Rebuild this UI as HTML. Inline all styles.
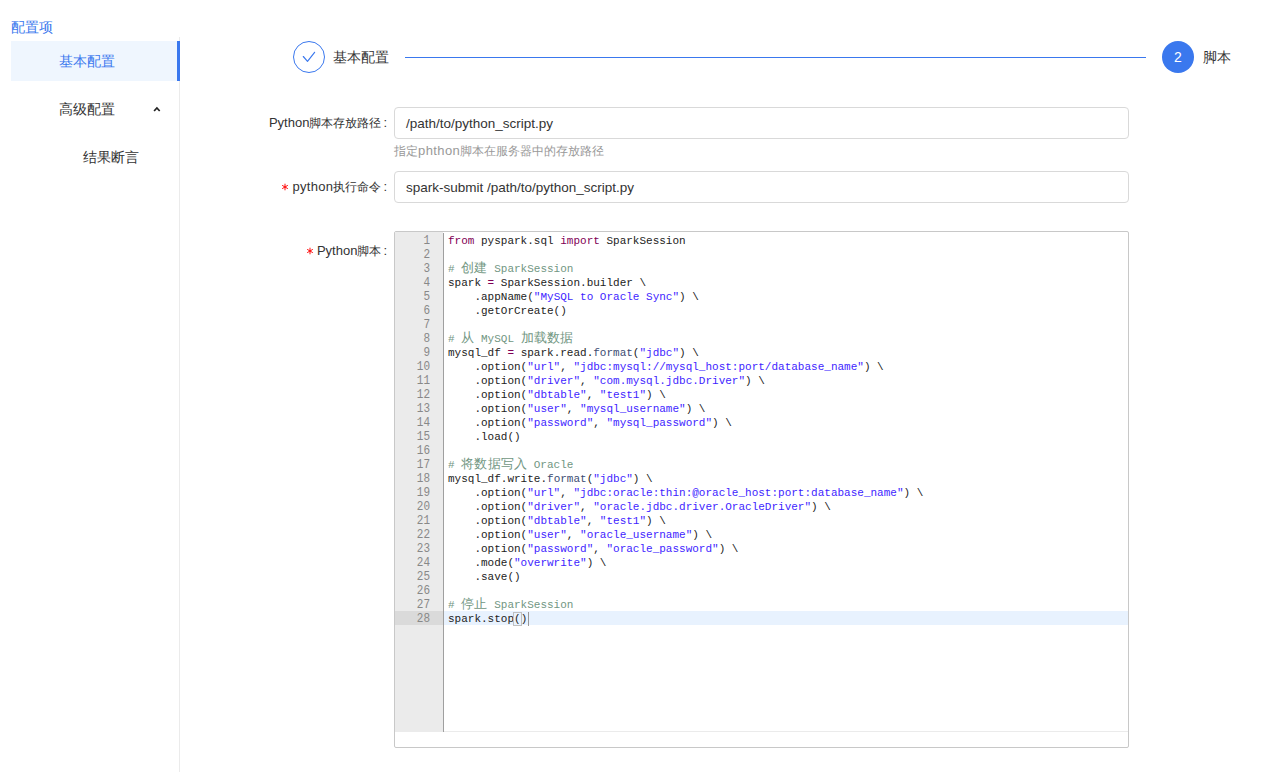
<!DOCTYPE html>
<html><head><meta charset="utf-8">
<style>
html,body{margin:0;padding:0;width:1282px;height:772px;overflow:hidden;background:#fff;}
body{font-family:"Liberation Sans",sans-serif;color:#333;position:relative;}
.abs{position:absolute;white-space:nowrap;}
.side-title{left:11px;top:17px;font-size:14px;line-height:20px;color:#3a78ee;}
.side-border{left:179px;top:37px;width:1px;height:735px;background:#ebebeb;}
.side-active{left:11px;top:41px;width:169px;height:40px;background:#eff6fe;}
.side-bar{left:177px;top:41px;width:3px;height:40px;background:#3a78ee;}
.menu{font-size:14px;line-height:20px;}
.step-circle{left:293px;top:41px;width:30px;height:30px;border:1px solid #3a78ee;border-radius:50%;}
.step-line{left:405px;top:57px;width:741px;height:1px;background:#3a78ee;}
.step-num{left:1162px;top:41px;width:32px;height:32px;border-radius:50%;background:#3a78ee;color:#fff;font-size:14px;line-height:32px;text-align:center;}
.label{font-size:13px;line-height:20px;color:#333;text-align:right;}
.req{color:#f5222d;display:inline-block;width:11px;position:relative;top:3px;}
.cj{font-size:12px;}
.col{display:inline-block;margin-left:2px;}
.input{left:394px;width:733px;height:30px;border:1px solid #d9d9d9;border-radius:4px;}
.input span{position:absolute;left:11px;top:7px;font-size:13.5px;line-height:18px;color:#333;}
.help{left:394px;top:141px;font-size:12px;line-height:20px;color:#999;}
.editor{left:394px;top:231px;width:733px;height:515px;border:1px solid #c8c8c8;border-radius:2px;overflow:hidden;}
.gutter{position:absolute;left:0;top:0;width:48px;height:500px;background:#ebebeb;}
.gborder{position:absolute;left:48px;top:1px;width:1px;height:499px;background:#9f9f9f;}
.hline{position:absolute;left:49px;top:499px;width:684px;height:1px;background:#ebebeb;}
.code{position:absolute;left:49px;top:0px;right:0;font-family:"Liberation Mono",monospace;font-size:11px;line-height:14px;}
.ln{position:absolute;left:0;width:35px;text-align:right;font-family:"Liberation Mono",monospace;font-size:11px;line-height:14px;color:#888;}
.row{position:absolute;left:0;right:0;height:14px;padding-left:4px;padding-top:1px;box-sizing:border-box;white-space:pre;color:#222;}
.row.act{background:rgb(232,242,254);}
.gl{position:absolute;left:0;width:35px;padding-right:13px;height:14px;text-align:right;font-family:"Liberation Mono",monospace;font-size:12px;line-height:14px;color:#888;transform:scaleX(0.9167);transform-origin:35px 50%;}
.gact{position:absolute;left:0;width:48px;height:14px;background:#dadada;}
i.w{font-style:normal;display:inline-block;width:13.2px;text-align:left;font-size:13px;line-height:14px;vertical-align:top;}
.b{outline:1px solid #c0c0c0;}
.cur{display:inline-block;width:1px;height:14px;background:#999;vertical-align:top;margin-left:1px;}
.k{color:rgb(127,0,85);}
.s{color:rgb(62,30,255);}
.c{color:rgb(113,150,130);}
.f{color:rgb(60,76,114);}
</style></head>
<body>
<div class="abs side-title">配置项</div>
<div class="abs side-border"></div>
<div class="abs side-active"></div>
<div class="abs side-bar"></div>
<div class="abs menu" style="left:59px;top:51px;color:#3a78ee;">基本配置</div>
<div class="abs menu" style="left:59px;top:99px;">高级配置</div>
<div class="abs menu" style="left:83px;top:147px;">结果断言</div>
<svg class="abs" style="left:150px;top:102px;" width="12" height="12" viewBox="0 0 12 12"><polyline points="4.1,9 6.9,5.9 9.7,9" fill="none" stroke="#222" stroke-width="1.7" stroke-linecap="butt" stroke-linejoin="miter"/></svg>

<svg class="abs" style="left:293px;top:41px;" width="32" height="32" viewBox="0 0 32 32"><circle cx="16" cy="16" r="15.5" fill="none" stroke="#3a78ee" stroke-width="1"/><polyline points="10.3,15.5 14.5,20.3 21.6,11.3" fill="none" stroke="#3a78ee" stroke-width="1.15" stroke-linecap="round" stroke-linejoin="round"/></svg>
<div class="abs" style="left:333px;top:47px;font-size:14px;line-height:20px;">基本配置</div>
<div class="abs step-line"></div>
<div class="abs step-num">2</div>
<div class="abs" style="left:1203px;top:47px;font-size:14px;line-height:20px;">脚本</div>

<div class="abs label" style="right:895px;top:113px;">Python<span class="cj">脚本存放路径</span><span class="col">:</span></div>
<div class="abs input" style="top:107px;"><span>/path/to/python_script.py</span></div>
<div class="abs help">指定<span style="font-size:13px;letter-spacing:0.4px;">phthon</span>脚本在服务器中的存放路径</div>
<svg class="abs" style="left:280.5px;top:183px;" width="8" height="8" viewBox="-4 -4 8 8"><g stroke="#f00" stroke-width="0.95" stroke-linecap="round"><line x1="0" y1="-2.9" x2="0" y2="2.9"/><line x1="-2.5" y1="-1.45" x2="2.5" y2="1.45"/><line x1="-2.5" y1="1.45" x2="2.5" y2="-1.45"/></g></svg>
<div class="abs label" style="right:895px;top:177px;"><span style="letter-spacing:0.3px">python</span><span class="cj">执行命令</span><span class="col">:</span></div>
<div class="abs input" style="top:171px;"><span>spark-submit /path/to/python_script.py</span></div>
<svg class="abs" style="left:306px;top:247px;" width="8" height="8" viewBox="-4 -4 8 8"><g stroke="#f00" stroke-width="0.95" stroke-linecap="round"><line x1="0" y1="-2.9" x2="0" y2="2.9"/><line x1="-2.5" y1="-1.45" x2="2.5" y2="1.45"/><line x1="-2.5" y1="1.45" x2="2.5" y2="-1.45"/></g></svg>
<div class="abs label" style="right:895px;top:241px;">Python<span class="cj">脚本</span><span class="col">:</span></div>

<div class="abs editor">
  <div class="gutter">
<div class="gl" style="top:2px">1</div>
<div class="gl" style="top:16px">2</div>
<div class="gl" style="top:30px">3</div>
<div class="gl" style="top:44px">4</div>
<div class="gl" style="top:58px">5</div>
<div class="gl" style="top:72px">6</div>
<div class="gl" style="top:86px">7</div>
<div class="gl" style="top:100px">8</div>
<div class="gl" style="top:114px">9</div>
<div class="gl" style="top:128px">10</div>
<div class="gl" style="top:142px">11</div>
<div class="gl" style="top:156px">12</div>
<div class="gl" style="top:170px">13</div>
<div class="gl" style="top:184px">14</div>
<div class="gl" style="top:198px">15</div>
<div class="gl" style="top:212px">16</div>
<div class="gl" style="top:226px">17</div>
<div class="gl" style="top:240px">18</div>
<div class="gl" style="top:254px">19</div>
<div class="gl" style="top:268px">20</div>
<div class="gl" style="top:282px">21</div>
<div class="gl" style="top:296px">22</div>
<div class="gl" style="top:310px">23</div>
<div class="gl" style="top:324px">24</div>
<div class="gl" style="top:338px">25</div>
<div class="gl" style="top:352px">26</div>
<div class="gl" style="top:366px">27</div>
<div class="gact" style="top:379px"></div><div class="gl" style="top:380px">28</div>
  </div>
  <div class="gborder"></div>
  <div class="hline"></div>
  <div class="code">
<div class="row" style="top:1px"><span class="k">from</span> pyspark.sql <span class="k">import</span> SparkSession</div>
<div class="row" style="top:15px"></div>
<div class="row" style="top:29px"><span class="c"># <i class="w">创</i><i class="w">建</i> SparkSession</span></div>
<div class="row" style="top:43px">spark <span class="k">=</span> SparkSession.builder \</div>
<div class="row" style="top:57px">    .appName(<span class="s">"MySQL to Oracle Sync"</span>) \</div>
<div class="row" style="top:71px">    .getOrCreate()</div>
<div class="row" style="top:85px"></div>
<div class="row" style="top:99px"><span class="c"># <i class="w">从</i> MySQL <i class="w">加</i><i class="w">载</i><i class="w">数</i><i class="w">据</i></span></div>
<div class="row" style="top:113px">mysql_df <span class="k">=</span> spark.read.<span class="f">format</span>(<span class="s">"jdbc"</span>) \</div>
<div class="row" style="top:127px">    .option(<span class="s">"url"</span>, <span class="s">"jdbc:mysql://mysql_host:port/database_name"</span>) \</div>
<div class="row" style="top:141px">    .option(<span class="s">"driver"</span>, <span class="s">"com.mysql.jdbc.Driver"</span>) \</div>
<div class="row" style="top:155px">    .option(<span class="s">"dbtable"</span>, <span class="s">"test1"</span>) \</div>
<div class="row" style="top:169px">    .option(<span class="s">"user"</span>, <span class="s">"mysql_username"</span>) \</div>
<div class="row" style="top:183px">    .option(<span class="s">"password"</span>, <span class="s">"mysql_password"</span>) \</div>
<div class="row" style="top:197px">    .load()</div>
<div class="row" style="top:211px"></div>
<div class="row" style="top:225px"><span class="c"># <i class="w">将</i><i class="w">数</i><i class="w">据</i><i class="w">写</i><i class="w">入</i> Oracle</span></div>
<div class="row" style="top:239px">mysql_df.write.<span class="f">format</span>(<span class="s">"jdbc"</span>) \</div>
<div class="row" style="top:253px">    .option(<span class="s">"url"</span>, <span class="s">"jdbc:oracle:thin:@oracle_host:port:database_name"</span>) \</div>
<div class="row" style="top:267px">    .option(<span class="s">"driver"</span>, <span class="s">"oracle.jdbc.driver.OracleDriver"</span>) \</div>
<div class="row" style="top:281px">    .option(<span class="s">"dbtable"</span>, <span class="s">"test1"</span>) \</div>
<div class="row" style="top:295px">    .option(<span class="s">"user"</span>, <span class="s">"oracle_username"</span>) \</div>
<div class="row" style="top:309px">    .option(<span class="s">"password"</span>, <span class="s">"oracle_password"</span>) \</div>
<div class="row" style="top:323px">    .mode(<span class="s">"overwrite"</span>) \</div>
<div class="row" style="top:337px">    .save()</div>
<div class="row" style="top:351px"></div>
<div class="row" style="top:365px"><span class="c"># <i class="w">停</i><i class="w">止</i> SparkSession</span></div>
<div class="row act" style="top:379px">spark.stop<span class="b">(</span>)<span class="cur"></span></div>
  </div>
</div>
</body></html>
